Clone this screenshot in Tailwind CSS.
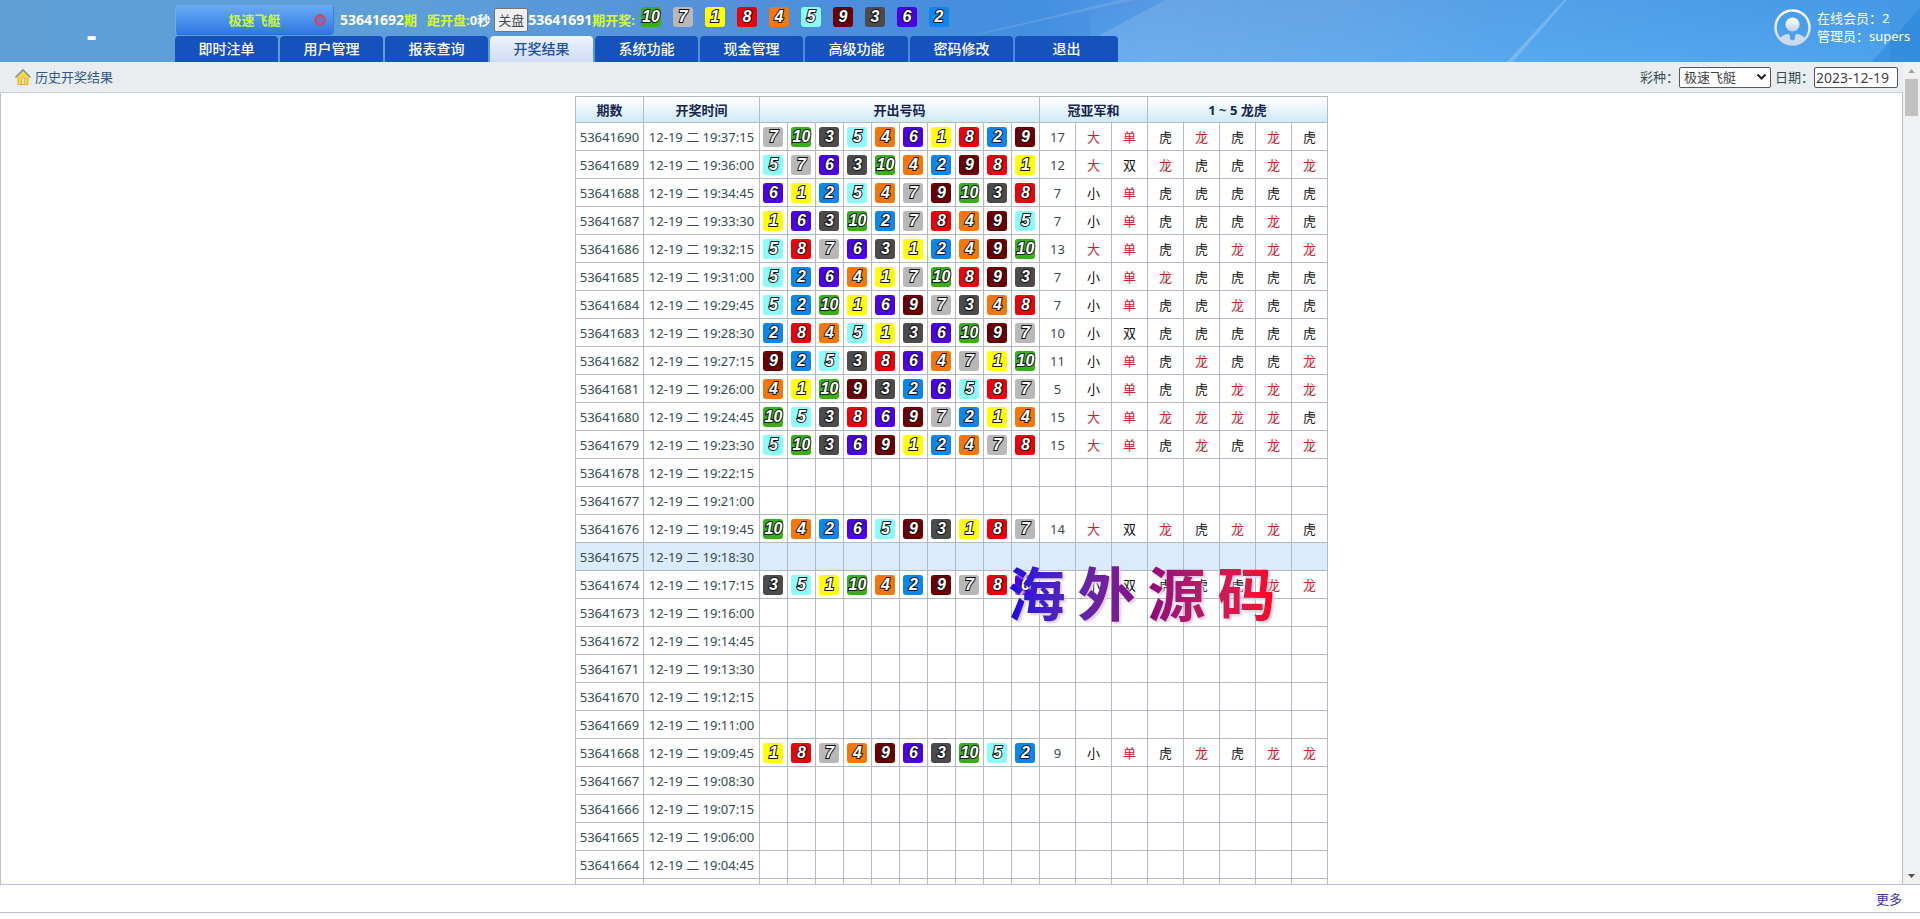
<!DOCTYPE html>
<html lang="zh-CN">
<head>
<meta charset="utf-8">
<meta name="viewport" content="width=device-width, initial-scale=1">
<title>历史开奖结果</title>
<script src="https://cdn.jsdelivr.net/npm/@tailwindcss/browser@4"></script>
</head>
<body class="flex h-screen flex-col overflow-hidden bg-white font-['Noto_Sans','Noto_Sans_CJK_SC',sans-serif] text-[13px] leading-5 text-[#344b50]">

<header class="relative flex h-[62px] shrink-0 overflow-hidden bg-[#5d9fd8] text-white">
  <svg class="absolute inset-0 h-full w-full" viewBox="0 0 1920 62" preserveAspectRatio="none" aria-hidden="true">
    <defs>
      <linearGradient id="sky" x1="0" x2="1" y1="0" y2="0">
        <stop offset="0" stop-color="#5f9fd6"/><stop offset=".22" stop-color="#5c9ed8"/><stop offset=".36" stop-color="#5592da"/><stop offset=".45" stop-color="#4a8edc"/><stop offset=".54" stop-color="#438fe0"/><stop offset=".6" stop-color="#5699e4"/><stop offset=".7" stop-color="#5b9fe4"/><stop offset=".8" stop-color="#53a0e8"/><stop offset="1" stop-color="#4497e4"/>
      </linearGradient>
      <linearGradient id="glow" x1="0" x2="0" y1="0" y2="1">
        <stop offset="0" stop-color="#5cb4f8" stop-opacity="0"/><stop offset="1" stop-color="#5cb4f8" stop-opacity=".4"/>
      </linearGradient>
      <linearGradient id="beam" x1="0" x2="1" y1="0" y2="0">
        <stop offset="0" stop-color="#fff" stop-opacity=".13"/><stop offset="1" stop-color="#fff" stop-opacity="0"/>
      </linearGradient>
    </defs>
    <path fill="url(#sky)" d="M0 0h1920v62H0z"/>
    <path fill="url(#glow)" d="M1090 0h800v62h-800z"/>
    <path fill="url(#beam)" d="M1165 0l-65 35v27h400V0z"/>
    <path fill="#fff" fill-opacity=".12" d="M960 38l160-38h14l-134 30z"/>
    <path fill="#fff" fill-opacity=".2" d="M1507 62l57-62h3l-54 62z"/>
    <path fill="#1478d0" fill-opacity=".35" d="M1872 62l48-54v54z"/>
  </svg>

  <div class="relative flex w-[175px] shrink-0 items-center justify-center pl-2 pt-2">
    <h1 class="text-3xl font-bold leading-8">-</h1>
  </div>

  <div class="relative flex flex-1 flex-col">
    <div class="flex h-9 items-start font-bold text-[#d8f53a]">
      <button type="button" class="mt-[5px] flex h-[30px] w-[159px] items-center rounded-sm border border-[#6cabf5] border-b-[#2c70d8] border-r-[#3b7edd] bg-gradient-to-b from-[#68aaf4] to-[#2f78e4] pr-[6px] text-[#c8fa32]">
        <span class="flex-1 pl-5 text-center">极速飞艇</span>
        <svg class="h-[14px] w-[14px]" viewBox="0 0 14 14" aria-hidden="true"><circle cx="7" cy="7" r="4.500" fill="#6a76cc" stroke="#c44c70" stroke-width="3"/><path d="M8 4.500l4 2.500-4 2.500z" fill="#5a7ad4"/></svg>
      </button>
      <p class="ml-[6px] flex h-10 items-center whitespace-nowrap"><span class="text-sm text-white">53641692</span>期</p>
      <p class="ml-[10px] flex h-10 items-center whitespace-nowrap">距开盘:<span class="text-white">0秒</span></p>
      <button type="button" class="ml-1 mt-2 h-6 w-[34px] rounded-xs border border-[#767676] bg-[#efefef] font-normal text-[#3c4c50]">关盘</button>
      <p class="flex h-10 items-center whitespace-nowrap"><span class="text-sm text-white">53641691</span>期开奖:</p>
      <div id="latest" class="ml-[6px] mt-[7px] flex gap-3"></div>
    </div>
    <nav class="flex h-[26px] gap-[2px] text-sm font-medium text-white">
      <a href="#" class="flex w-[103px] items-center justify-center rounded-t-sm bg-[#1552bc]">即时注单</a>
      <a href="#" class="flex w-[103px] items-center justify-center rounded-t-sm bg-[#1552bc]">用户管理</a>
      <a href="#" class="flex w-[103px] items-center justify-center rounded-t-sm bg-[#1552bc]">报表查询</a>
      <a href="#" aria-current="page" class="flex w-[103px] items-center justify-center rounded-t bg-gradient-to-b from-[#eef3fd] to-[#cfdcf3] text-[#1d50a0]">开奖结果</a>
      <a href="#" class="flex w-[103px] items-center justify-center rounded-t-sm bg-[#1552bc]">系统功能</a>
      <a href="#" class="flex w-[103px] items-center justify-center rounded-t-sm bg-[#1552bc]">现金管理</a>
      <a href="#" class="flex w-[103px] items-center justify-center rounded-t-sm bg-[#1552bc]">高级功能</a>
      <a href="#" class="flex w-[103px] items-center justify-center rounded-t-sm bg-[#1552bc]">密码修改</a>
      <a href="#" class="flex w-[103px] items-center justify-center rounded-t-sm bg-[#1552bc]">退出</a>
    </nav>
  </div>

  <div class="relative flex w-[146px] shrink-0 items-start gap-[6px] pt-[9px]">
    <svg class="h-[37px] w-[37px] shrink-0" viewBox="0 0 37 37" aria-hidden="true">
      <defs>
        <linearGradient id="silver" x1="0" x2="0" y1="0" y2="1"><stop offset="0" stop-color="#fff"/><stop offset="1" stop-color="#c3d2e8"/></linearGradient>
        <clipPath id="disc"><circle cx="18.500" cy="18.500" r="17"/></clipPath>
      </defs>
      <circle cx="18.500" cy="18.500" r="17" fill="none" stroke="url(#silver)" stroke-width="2.500"/>
      <circle cx="18.500" cy="15.500" r="7" fill="url(#silver)"/>
      <path clip-path="url(#disc)" fill="#cfdbee" d="M4 32c2-4 5-6 9-7 3-.5 3 2 3 5l2.500 2L21 30c0-3 0-5.500 3-5 4 1 7 3 9 7l-6 6H10zM17 33l1.500-2L20 33l1 4h-5z"/>
    </svg>
    <div class="whitespace-nowrap leading-[18px]">
      <p>在线会员：2</p>
      <p>管理员：supers</p>
    </div>
  </div>
</header>

<div class="flex min-h-0 flex-1">
  <div class="flex min-w-0 flex-1 flex-col">
    <div class="flex h-[31px] shrink-0 items-center border-b border-[#c8d2da] bg-[#e9edf0] pl-[14px] pr-[5px]">
      <svg class="h-[18px] w-[18px]" viewBox="0 0 18 18" aria-hidden="true">
        <path d="M4 8l5-5 5 5v8.500H4z" fill="#fbd24e" stroke="#e9a92a"/>
        <path d="M7.500 10h3v6.500h-3z" fill="#fff6d0" stroke="#e79c26" stroke-width=".7"/>
        <path d="M1.500 9.500L9 2l7.500 7.500" fill="none" stroke="#6f9a86" stroke-width="1.600"/>
        <path d="M2.800 9.800L9 3.700l6.200 6.100" fill="none" stroke="#f9dc72"/>
      </svg>
      <h2 class="ml-[3px] flex-1 text-[#30578a]">历史开奖结果</h2>
      <label for="game">彩种：</label>
      <span class="relative flex">
        <select id="game" class="h-[21px] w-[92px] appearance-none rounded-xs border border-[#55595c] bg-white pl-1 leading-4 text-[#444]"><option>极速飞艇</option></select>
        <svg class="pointer-events-none absolute right-1 top-[6px] h-2 w-[11px]" viewBox="0 0 11 8" aria-hidden="true"><path d="M1.500 1.500l4 4 4-4" fill="none" stroke="#222" stroke-width="2"/></svg>
      </span>
      <label for="day" class="ml-1">日期：</label>
      <input id="day" type="text" value="2023-12-19" class="h-[21px] w-[84px] rounded-xs border border-[#55595c] bg-white px-px text-sm leading-4 text-[#444]">
    </div>

    <main class="relative min-h-0 flex-1 overflow-hidden border-x border-[#b9c2ca] pt-[3px]">
      <table class="mx-auto border-collapse table-fixed w-[753px] text-center leading-5">
        <colgroup>
          <col class="w-[68px]"><col class="w-[116px]">
          <col span="10" class="w-[28px]">
          <col span="8" class="w-[36px]">
        </colgroup>
        <thead>
          <tr class="h-[26px] bg-gradient-to-b from-white to-[#cde9f5] text-[#172554]">
            <th class="border border-[#b2bac3] p-0">期数</th>
            <th class="border border-[#b2bac3] p-0">开奖时间</th>
            <th class="border border-[#b2bac3] p-0" colspan="10">开出号码</th>
            <th class="border border-[#b2bac3] p-0" colspan="3">冠亚军和</th>
            <th class="border border-[#b2bac3] p-0" colspan="5">1 ~ 5 龙虎</th>
          </tr>
        </thead>
        <tbody id="rows"></tbody>
      </table>
      <div class="absolute left-1/2 top-[460px] ml-[56px] flex gap-3 bg-gradient-to-r from-[#1a00e6] via-[#8a0080] to-[#ff0010] bg-clip-text font-['Noto_Sans_CJK_SC',sans-serif] text-[58px] font-bold leading-[76px] text-transparent drop-shadow-[2px_2px_1px_#e0c8e8]"><span>海</span><span>外</span><span>源</span><span>码</span></div>
    </main>
  </div>

  <div class="flex w-[17px] shrink-0 flex-col items-center bg-[#f0f1f2]" aria-hidden="true">
    <svg class="h-[17px] w-[17px]" viewBox="0 0 17 17"><path d="M5 11l3.500-4 3.500 4z" fill="#a3a3a3"/></svg>
    <div class="h-[37px] w-[13px] bg-[#c1c1c1]"></div>
    <div class="flex-1"></div>
    <svg class="h-[17px] w-[17px]" viewBox="0 0 17 17"><path d="M5 7l3.500 4L12 7z" fill="#505050"/></svg>
  </div>
</div>

<footer class="mb-[6px] flex h-[29px] shrink-0 items-center justify-end border-y border-[#b7bfcc] bg-white pr-[18px]">
  <a href="#" class="text-[#4334a4]">更多</a>
</footer>

<script>
const BALL = {
  1: 'bg-[#ffff00]', 2: 'bg-[#0a86f0]', 3: 'bg-[#4b4b4b]', 4: 'bg-[#f47708]', 5: 'bg-[#8afcfc]',
  6: 'bg-[#4c00e8]', 7: 'bg-[#b8b8b8]', 8: 'bg-[#ee0008]', 9: 'bg-[#6a0004]', 10: 'bg-[#36b016]'
};
const ball = n => `<span class="mx-auto flex h-5 w-5 items-center justify-center rounded-[3px] font-['Liberation_Sans',Arial,sans-serif] text-base font-bold italic leading-5 text-white [-webkit-text-stroke:2px_#111] [paint-order:stroke_fill] ${BALL[n]}">${n}</span>`;
const cell = (content, style) => `<td class="border border-[#b2bac3] p-0 ${style || ''}">${content}</td>`;
const RED = 'text-[#d0202a]', BLACK = 'text-[#111]';

const results = {
  53641690: [7,10,3,5,4,6,1,8,2,9], 53641689: [5,7,6,3,10,4,2,9,8,1],
  53641688: [6,1,2,5,4,7,9,10,3,8], 53641687: [1,6,3,10,2,7,8,4,9,5],
  53641686: [5,8,7,6,3,1,2,4,9,10], 53641685: [5,2,6,4,1,7,10,8,9,3],
  53641684: [5,2,10,1,6,9,7,3,4,8], 53641683: [2,8,4,5,1,3,6,10,9,7],
  53641682: [9,2,5,3,8,6,4,7,1,10], 53641681: [4,1,10,9,3,2,6,5,8,7],
  53641680: [10,5,3,8,6,9,7,2,1,4], 53641679: [5,10,3,6,9,1,2,4,7,8],
  53641676: [10,4,2,6,5,9,3,1,8,7], 53641674: [3,5,1,10,4,2,9,7,8,6],
  53641668: [1,8,7,4,9,6,3,10,5,2]
};
const pad = n => String(n).padStart(2, '0');
let html = '';
for (let i = 0; i < 28; i++) {
  const id = 53641690 - i, s = 19 * 3600 + 37 * 60 + 15 - 75 * i, r = results[id];
  const time = `${pad(Math.floor(s / 3600))}:${pad(Math.floor(s / 60) % 60)}:${pad(s % 60)}`;
  html += `<tr class="h-[28px] ${id === 53641675 ? 'bg-[#dcebfb]' : 'bg-white'}">` + cell(id) + cell('12-19 二 ' + time, 'whitespace-nowrap');
  if (r) {
    const sum = r[0] + r[1];
    html += r.map(n => cell(ball(n))).join('') + cell(sum)
      + (sum > 11 ? cell('大', RED) : cell('小', BLACK))
      + (sum % 2 ? cell('单', RED) : cell('双', BLACK));
    for (let k = 0; k < 5; k++) html += r[k] > r[9 - k] ? cell('龙', RED) : cell('虎', BLACK);
  } else {
    html += cell('').repeat(18);
  }
  html += '</tr>';
}
document.getElementById('rows').innerHTML = html;
document.getElementById('latest').innerHTML = [10,7,1,8,4,5,9,3,6,2].map(ball).join('');
</script>
</body>
</html>
